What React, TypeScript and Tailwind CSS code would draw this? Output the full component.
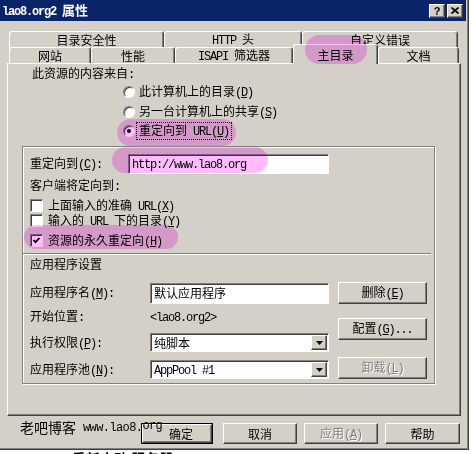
import React from "react";

const ASCII = "font-['Liberation_Mono',monospace] text-[12px] tracking-[-1.2px]";

function runs(s: string, key: string) {
  return s
    .split(/([\x20-\x7e]+)/)
    .filter(Boolean)
    .map((p, i) =>
      /^[\x20-\x7e]+$/.test(p) ? (
        <span key={key + i} className={ASCII}>
          {p}
        </span>
      ) : (
        <span key={key + i}>{p}</span>
      )
    );
}

// "&X" marks the underlined accelerator letter
const T: React.FC<{ s: string }> = ({ s }) => {
  const parts = s.split(/&(.)/);
  return (
    <span className="whitespace-pre">
      {parts.map((p, i) =>
        i % 2 ? (
          <span key={i} className={ASCII + " underline underline-offset-[1px]"}>
            {p}
          </span>
        ) : (
          runs(p, "r" + i)
        )
      )}
    </span>
  );
};

const raised =
  "bg-[#d4d0c8] border border-t-white border-l-white border-r-[#404040] border-b-[#404040] shadow-[inset_-1px_-1px_#808080]";
const sunken =
  "bg-white border border-t-[#808080] border-l-[#808080] border-r-white border-b-white shadow-[inset_1px_1px_#404040]";

const Radio: React.FC<{ on?: boolean }> = ({ on }) => (
  <span
    className={`w-[12px] h-[12px] shrink-0 rounded-full flex items-center justify-center ${sunken}`}
  >
    {on && <span className="w-[4px] h-[4px] rounded-full bg-black" />}
  </span>
);

const Check: React.FC<{ on?: boolean }> = ({ on }) => (
  <span className={`w-[13px] h-[13px] shrink-0 flex items-center justify-center ${sunken}`}>
    {on && (
      <svg width="9" height="9" viewBox="0 0 9 9">
        <polyline points="1.5,4 3.5,6.2 7.5,2" fill="none" stroke="black" strokeWidth="1.8" />
      </svg>
    )}
  </span>
);

const Btn: React.FC<{ s: string; className: string; disabled?: boolean }> = ({ s, className, disabled }) => (
  <div
    className={`flex items-center justify-center ${raised} ${
      disabled ? "text-[#808080] [text-shadow:1px_1px_0_white]" : ""
    } ${className}`}
  >
    <T s={s} />
  </div>
);

const Select: React.FC<{ s: string }> = ({ s }) => (
  <div className={`w-[179px] h-[19px] flex items-center justify-between pl-[3px] pr-[1px] ${sunken}`}>
    <T s={s} />
    <span className={`w-[16px] h-[15px] flex items-center justify-center ${raised}`}>
      <svg width="7" height="4" viewBox="0 0 7 4">
        <polygon points="0,0 7,0 3.5,4" fill="black" />
      </svg>
    </span>
  </div>
);

const Highlight: React.FC<{ className: string }> = ({ className }) => (
  <div className={`pointer-events-none absolute z-20 rounded-full bg-[#ffbcff] mix-blend-multiply ${className}`} />
);

const tab =
  "bg-[#d4d0c8] flex items-center justify-center border-l border-t border-r border-l-white border-t-white border-r-[#404040] rounded-t-[3px] shadow-[inset_-1px_0_#808080]";

export default function App() {
  return (
    <div className="relative w-[471px] h-[454px] overflow-hidden bg-white text-black text-[12px] leading-[12px] font-['Noto_Sans_CJK_SC',sans-serif]">
      <div className="w-[469px] h-[450px] flex flex-col bg-[#d4d0c8] border-r border-b border-[#404040] shadow-[inset_-1px_-1px_#808080]">
        {/* title bar */}
        <div className="h-[21px] mr-[2px] shrink-0 bg-[#0a246a] flex items-center justify-between pl-[2px] pr-[3px] text-white font-bold">
          <span className="text-[13px]">
            <T s="lao8.org2 属性" />
          </span>
          <div className="flex gap-[2px]">
            <span className={`w-[16px] h-[14px] flex items-center justify-center text-black text-[11px] font-bold font-['Liberation_Sans',sans-serif] ${raised}`}>
              ?
            </span>
            <span className={`w-[16px] h-[14px] flex items-center justify-center ${raised}`}>
              <svg width="8" height="7" viewBox="0 0 8 7">
                <path d="M0.5 0.5 L7.5 6.5 M7.5 0.5 L0.5 6.5" stroke="black" strokeWidth="1.6" />
              </svg>
            </span>
          </div>
        </div>

        {/* tabs */}
        <div className="mt-[10px] pl-[9px] h-[32px] flex flex-col shrink-0">
          <div className="h-[16px] flex">
            <div className={`w-[155px] h-[17px] ${tab}`}>
              <T s="目录安全性" />
            </div>
            <div className={`w-[138px] h-[17px] ${tab}`}>
              <T s="HTTP 头" />
            </div>
            <div className={`w-[156px] h-[17px] ${tab}`}>
              <T s="自定义错误" />
            </div>
          </div>
          <div className="h-[16px] flex items-end relative z-10">
            <div className={`w-[82px] h-[16px] pt-[1px] ${tab}`}>
              <T s="网站" />
            </div>
            <div className={`w-[84px] h-[16px] pt-[1px] ${tab}`}>
              <T s="性能" />
            </div>
            <div className={`w-[118px] h-[16px] pt-[1px] ${tab}`}>
              <T s="ISAPI 筛选器" />
            </div>
            <div className={`w-[85px] h-[20px] -mb-[1px] pt-[1px] ${tab}`}>
              <T s="主目录" />
            </div>
            <div className={`w-[81px] h-[16px] pt-[1px] ${tab}`}>
              <T s="文档" />
            </div>
          </div>
        </div>

        {/* panel */}
        <div className={`ml-[7px] w-[454px] h-[353px] shrink-0 flex flex-col ${raised}`}>
          <div className="mt-[3px] ml-[24px] h-[12px]">
            <T s="此资源的内容来自:" />
          </div>
          <div className="mt-[3px] ml-[115px] flex flex-col">
            <div className="h-[20px] flex items-center gap-[4px]">
              <Radio />
              <T s="此计算机上的目录(&D)" />
            </div>
            <div className="h-[19px] flex items-center gap-[4px]">
              <Radio />
              <T s="另一台计算机上的共享(&S)" />
            </div>
            <div className="h-[20px] flex items-center gap-[1px]">
              <Radio on />
              <span className="border border-dotted border-black px-[2px] py-[1px]">
                <T s="重定向到 URL(&U)" />
              </span>
            </div>
          </div>

          {/* frame */}
          <div className="mt-[5px] ml-[14px] w-[413px] h-[238px] flex flex-col border border-[#808080] shadow-[1px_1px_0_white,inset_1px_1px_0_white]">
            <div className="mt-[7px] pl-[7px] h-[20px] flex items-center">
              <span className="w-[98px]">
                <T s="重定向到(&C):" />
              </span>
              <div className={`w-[201px] h-[20px] flex items-center pl-[3px] ${sunken}`}>
                <T s="http://www.lao8.org" />
              </div>
            </div>
            <div className="mt-[5px] pl-[7px] h-[12px]">
              <T s="客户端将定向到:" />
            </div>
            <div className="mt-[8px] pl-[7px] h-[13px] flex items-center gap-[5px]">
              <Check />
              <T s="上面输入的准确 URL(&X)" />
            </div>
            <div className="mt-[2px] pl-[7px] h-[13px] flex items-center gap-[5px]">
              <Check />
              <T s="输入的 URL 下的目录(&Y)" />
            </div>
            <div className="mt-[7px] pl-[7px] h-[13px] flex items-center gap-[5px]">
              <Check on />
              <T s="资源的永久重定向(&H)" />
            </div>
            <div className="mt-[6px] w-[408px] h-[2px] border-t border-b border-t-[#808080] border-b-white" />
            <div className="mt-[3px] pl-[7px] h-[12px]">
              <T s="应用程序设置" />
            </div>
            <div className="mt-[12px] pl-[7px] flex">
              <div className="flex flex-col">
                <div className="mt-[1px] h-[20px] flex items-center">
                  <span className="w-[120px]">
                    <T s="应用程序名(&M):" />
                  </span>
                  <div className={`w-[179px] h-[21px] flex items-center pl-[3px] ${sunken}`}>
                    <T s="默认应用程序" />
                  </div>
                </div>
                <div className="mt-[4px] h-[20px] flex items-center">
                  <span className="w-[120px]">
                    <T s="开始位置:" />
                  </span>
                  <T s="<lao8.org2>" />
                </div>
                <div className="mt-[6px] h-[19px] flex items-center">
                  <span className="w-[120px]">
                    <T s="执行权限(&P):" />
                  </span>
                  <Select s="纯脚本" />
                </div>
                <div className="mt-[8px] h-[19px] flex items-center">
                  <span className="w-[120px]">
                    <T s="应用程序池(&N):" />
                  </span>
                  <Select s="AppPool #1" />
                </div>
              </div>
              <div className="ml-[9px] flex flex-col">
                <Btn s="删除(&E)" className="w-[89px] h-[22px]" />
                <Btn s="配置(&G)..." className="mt-[14px] w-[89px] h-[22px]" />
                <Btn s="卸载(&L)" disabled className="mt-[17px] w-[89px] h-[22px]" />
              </div>
            </div>
          </div>
        </div>

        {/* dialog buttons */}
        <div className="mt-[7px] pr-[8px] flex justify-end">
          <div className="w-[72px] h-[21px] border border-black">
            <Btn s="确定" className="w-full h-full pl-[8px]" />
          </div>
          <Btn s="取消" className="ml-[10px] w-[74px] h-[21px]" />
          <Btn s="应用(&A)" disabled className="ml-[7px] w-[74px] h-[21px]" />
          <Btn s="帮助" className="ml-[7px] w-[75px] h-[21px]" />
        </div>
      </div>

      {/* text of the window below, clipped */}
      <div className="mt-[1px] pl-[72px] text-[14px] leading-[14px] font-bold">重新启动 服务器</div>

      {/* watermark */}
      <div className="pointer-events-none absolute z-20 left-[20px] top-[420px] flex items-end">
        <span className="text-[14px] leading-[14px]">老吧博客</span>
        <span className="ml-[7px] font-['Liberation_Mono',monospace] text-[12px] tracking-[-0.6px]">www.lao8.</span>
        <span className="mb-[2px] font-['Liberation_Mono',monospace] text-[12px] tracking-[-0.6px]">org</span>
      </div>

      {/* pink marks */}
      <Highlight className="left-[305px] top-[35px] w-[62px] h-[29px]" />
      <Highlight className="left-[117px] top-[119px] w-[119px] h-[27px]" />
      <Highlight className="left-[112px] top-[147px] w-[156px] h-[26px]" />
      <Highlight className="left-[24px] top-[225px] w-[154px] h-[24px]" />
    </div>
  );
}
